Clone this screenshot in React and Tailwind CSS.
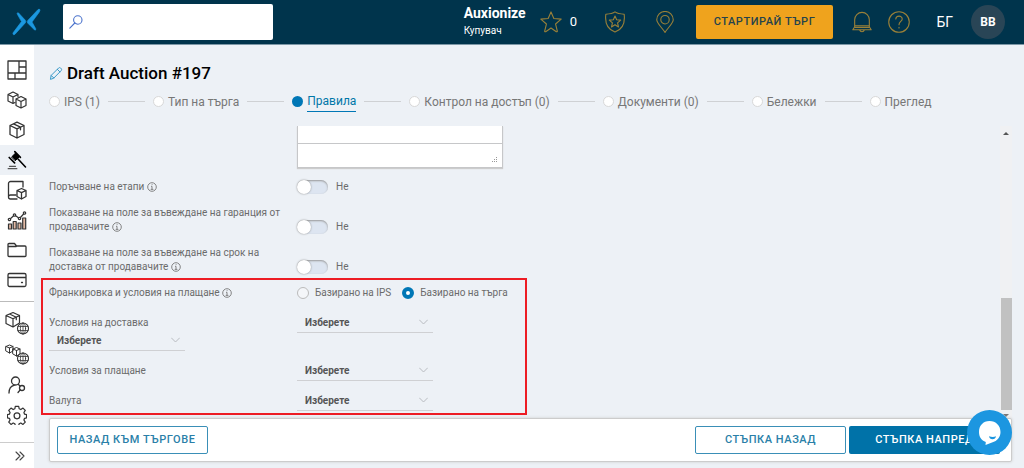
import React from "react";

function Icon({ size = 22, box = 24, sw = 1.3, children, className = "" }) {
  return (
    <svg
      width={size}
      height={size}
      viewBox={`0 0 ${box} ${box}`}
      fill="none"
      stroke="currentColor"
      strokeWidth={sw}
      strokeLinecap="round"
      strokeLinejoin="round"
      className={`shrink-0 ${className}`}
      aria-hidden="true"
    >
      {children}
    </svg>
  );
}

const GLOBE = (
  <>
    <circle cx="18" cy="17.500" r="5.500" fill="#fff" strokeWidth="1.100" />
    <g strokeWidth="0.800">
      <ellipse cx="18" cy="17.500" rx="2.600" ry="5.500" />
      <path d="M13 15.500h10M13 19.500h10M18 12v11" />
    </g>
  </>
);

const MAIN_NAV = [
  {
    name: "Табло",
    icon: (
      <Icon size={20} box={20} sw={1.3}>
        <path d="M1 1h18v18H1zM12 1v12M1 13h18M12 7h7M8 13v6" />
      </Icon>
    ),
  },
  {
    name: "Групи продукти",
    icon: (
      <Icon size={20} box={20} sw={1.2}>
        <path d="M8 12.500L6 13.500 1 11V4.500L6 2l5 2.500v2M1 4.500L6 7l5-2.500M6 7v6.500" />
        <path d="M9 9l5-2.500L19 9v6.500L14 18l-5-2.500zM9 9l5 2.500L19 9M14 11.500V18" />
      </Icon>
    ),
  },
  {
    name: "Продукти",
    icon: (
      <Icon size={18} box={18} sw={1.3}>
        <path d="M9 1.200l7 3.300v9L9 17l-7-3.500v-9zM2 4.500l7 3.300 7-3.300M9 7.800V17M5.500 2.900l7 3.300v2.600" />
      </Icon>
    ),
  },
  {
    name: "Търгове",
    active: true,
    icon: (
      <Icon size={20} box={20} sw={1}>
        <path d="M4.800 6.800l4-4 3.700 3.700-4 4z" fill="currentColor" />
        <path d="M2.200 7.500l5.400 5.400M7.800 1.700l5.600 5.600" strokeWidth="1.700" />
        <path d="M10.800 8.800L18.500 17" strokeWidth="1.600" />
        <path d="M2.500 16.300h6M1.200 18.700h8.600" strokeWidth="1.300" stroke="#555" />
      </Icon>
    ),
  },
  {
    name: "Каталог",
    icon: (
      <Icon size={20} box={20} sw={1.3}>
        <path d="M16 7V1.500H3.500A2 2 0 0 0 1.500 3.500V17a2 2 0 0 0 2 2H10M1.500 17a2 2 0 0 1 2-2H9" />
        <path d="M10 10.500L14.500 8.500 19 10.500v6L14.500 19 10 16.500zM10 10.500l4.500 2.200 4.500-2.200M14.500 12.700V19" />
      </Icon>
    ),
  },
  {
    name: "Отчети",
    icon: (
      <Icon size={20} box={20} sw={1.2}>
        <path d="M1.500 14h3v5h-3zM6.200 11.500h3v7.500h-3zM11 13h3v6h-3zM15.700 8h3v11h-3z" fill="#e2b9a4" />
        <path d="M2.500 9.500L7.500 5l5 3.500L17.500 3" />
        <circle cx="2.500" cy="9.500" r="1.200" fill="#fff" />
        <circle cx="7.500" cy="5" r="1.200" fill="#fff" />
        <circle cx="12.500" cy="8.500" r="1.200" fill="#fff" />
        <circle cx="17.500" cy="3" r="1.200" fill="#fff" />
      </Icon>
    ),
  },
  {
    name: "Папки",
    icon: (
      <Icon size={20} box={20} sw={1.3}>
        <path d="M1 15.500V4.500a1 1 0 0 1 1-1h5.500l2 2.500H18a1 1 0 0 1 1 1v8.500a1 1 0 0 1-1 1H2a1 1 0 0 1-1-1zM1.200 6.500h8" />
      </Icon>
    ),
  },
  {
    name: "Плащания",
    icon: (
      <Icon size={20} box={20} sw={1.3}>
        <path d="M2.500 3.500h15a1.500 1.500 0 0 1 1.500 1.500v10a1.500 1.500 0 0 1-1.500 1.500h-15A1.500 1.500 0 0 1 1 15V5a1.500 1.500 0 0 1 1.500-1.500zM1 7.500h18M14.500 12.500h1" />
      </Icon>
    ),
  },
];

const WORLD_NAV = [
  {
    name: "Глобални продукти",
    icon: (
      <Icon size={24} sw={1.2}>
        <path d="M1 4.500L8 1.500l6.500 3V12L8 16l-7-3.500zM1 4.500l7 3.300 6.500-3.300M8 7.800V16M4.500 3l6.800 3.200v2.500" />
        {GLOBE}
      </Icon>
    ),
  },
  {
    name: "Глобални групи",
    icon: (
      <Icon size={24} sw={1}>
        <path d="M1 5.500L4.500 4 8 5.500V10l-3.500 2L1 10zM1 5.500L4.500 7 8 5.500M4.500 7v5" />
        <path d="M8 8l3.500-1.500L15 8v5l-3.500 2L8 13zM8 8l3.500 1.500L15 8M11.500 9.500V15" />
        {GLOBE}
      </Icon>
    ),
  },
];

const USER_NAV = [
  {
    name: "Потребители",
    icon: (
      <Icon size={18} box={18} sw={1.300}>
        <circle cx="7.500" cy="5" r="4" />
        <path d="M1 17c0-4.500 2-7 5.500-7.800M10.500 8.500l1 1" />
        <circle cx="14" cy="12" r="2.500" />
        <path d="M12.200 13.800L10 16.500" />
      </Icon>
    ),
  },
  {
    name: "Настройки",
    icon: (
      <Icon size={20} box={24} sw={1.500}>
        <path d="M10 1.500h4l.6 3 2 .9 2.600-1.700 2.700 2.800-1.600 2.500.8 2 2.400.6v3.800l-2.400.6-.8 2 1.600 2.500-2.700 2.800-2.600-1.700-2 .9-.6 2.500h-4l-.6-2.500-2-.9-2.600 1.700-2.700-2.800 1.600-2.500-.8-2-2.400-.6v-3.800l2.400-.6.8-2-1.600-2.500 2.700-2.800 2.600 1.700 2-.9z" />
        <circle cx="12" cy="13" r="3.500" />
      </Icon>
    ),
  },
];

function NavGroup({ items }) {
  return (
    <ul>
      {items.map((it) => (
        <li key={it.name}>
          <a
            href="#"
            aria-label={it.name}
            aria-current={it.active ? "page" : undefined}
            className={
              it.active
                ? "flex h-[30px] items-center justify-center bg-[#edf1f6] text-black"
                : "flex h-[30px] items-center justify-center text-[#333]"
            }
          >
            {it.icon}
          </a>
        </li>
      ))}
    </ul>
  );
}

function Sidebar() {
  return (
    <nav className="flex w-[34px] shrink-0 flex-col bg-white pt-2.5">
      <NavGroup items={MAIN_NAV} />
      <hr className="mt-1.5 mb-1.5 border-[#bbb]" />
      <NavGroup items={WORLD_NAV} />
      <div className="h-0.5" />
      <NavGroup items={USER_NAV} />
      <button
        type="button"
        aria-label="Разгъване"
        className="mt-auto flex h-[26px] items-center justify-center border-t border-[#ccc] pl-1.5 text-[#444]"
      >
        <Icon size={10} box={10} sw={1.1}>
          <path d="M1 1l4 4-4 4M5 1l4 4-4 4" />
        </Icon>
      </button>
    </nav>
  );
}

function Header() {
  return (
    <header className="flex h-[45px] shrink-0 items-center border-b border-[#7d98a7] bg-[#00344c] pr-[19px] pl-3 text-white">
      <a href="#" aria-label="Auxionize">
        <svg
          width="29"
          height="28"
          viewBox="0 0 29 28"
          fill="#1b98e0"
          stroke="#1b98e0"
          strokeWidth="0.600"
          aria-hidden="true"
        >
          <path d="M5.200 5.200Q5.500 4.200 6.600 5L13.300 12.200Q14.500 13.600 13.200 15L3 26.200Q1 27.500 .9 25.600 1 24.700 2 23.500L9.500 13.600 5.500 6.600Q5 5.800 5.200 5.200z" />
          <path d="M27.800 1.500Q28.400 2.500 27 4.500L20 14 23.700 20.600Q24.200 22.600 22.600 22L15.800 15.200Q14.600 13.800 15.800 12.400L25.800 1.800Q27.200 .6 27.800 1.500z" />
        </svg>
      </a>
      <label className="ml-[22px] flex h-9 w-[210px] items-center rounded-xs bg-white pl-1.5">
        <Icon size={14} box={14} sw={1.1} className="text-[#4a72cc]">
          <circle cx="8.800" cy="5" r="4.200" />
          <path d="M5.800 8L.8 13.200" />
        </Icon>
        <input
          type="search"
          aria-label="Търсене"
          className="h-full w-full bg-transparent px-2 text-[13px] text-[#333] outline-none"
        />
      </label>
      <div className="ml-auto flex items-center">
        <div className="w-[76px]">
          <div className="text-[14px] leading-[17px] font-bold">Auxionize</div>
          <div className="text-[10px] leading-[17px]">Купувач</div>
        </div>
        <a href="#" className="flex w-[64px] items-center gap-2 text-[13px]" aria-label="Любими 0">
          <Icon size={22} sw={1.2} className="text-[#998039]">
            <path d="M12 1l3.100 7.200 8 .7-6.100 5.300 1.900 7.800q-.1 1-1.100.6L12 18.500l-5.800 4.100q-1 .4-1.100-.6L7 14.200.9 8.900l8-.7z" />
          </Icon>
          <span>0</span>
        </a>
        <a href="#" className="w-[50px]" aria-label="Сигурност">
          <Icon size={22} sw={1.200} className="text-[#998039]">
            <path d="M12 1c2.500 1.800 6 2.300 10 2.500 1 8-.3 16-10 19.500C2.300 19.500 1 11.500 2 3.500 6 3.300 9.500 2.800 12 1z" />
            <path d="M12 5.500l1.800 4.100 4.400.4-3.400 3 1 4.400L12 15l-3.800 2.400 1-4.400-3.400-3 4.400-.4z" />
          </Icon>
        </a>
        <a href="#" className="w-[42px]" aria-label="Локация">
          <Icon size={22} sw={1.200} className="text-[#998039]">
            <path d="M12 23.300C9.500 19 3 13.500 3 9.500a9 9 0 0 1 18 0c0 4-6.500 9.500-9 13.800z" />
            <circle cx="12" cy="9.500" r="4.600" />
          </Icon>
        </a>
        <button
          type="button"
          className="h-[34px] rounded-xs bg-[#efa31d] px-[18px] text-[11px] font-medium tracking-wider whitespace-nowrap text-[#26434c]"
        >
          СТАРТИРАЙ ТЪРГ
        </button>
        <button type="button" aria-label="Известия" className="ml-[18px]">
          <Icon size={22} sw={1.200} className="text-[#998039]">
            <path d="M4 18V9.500a8 8 0 0 1 16 0V18M3.500 18h17l1.500 2.500H2zM9.500 20.700a2.600 2.600 0 0 0 5 0M4 16.200h16" />
          </Icon>
        </button>
        <button type="button" aria-label="Помощ" className="ml-[15px]">
          <Icon size={22} sw={1.200} className="text-[#998039]">
            <circle cx="12" cy="12" r="11.200" />
            <path d="M8.500 8.800c.2-4.300 7-4.200 7-.2 0 2.800-3.500 2.900-3.500 6.400M12 17.800v.8" />
          </Icon>
        </button>
        <button type="button" className="ml-[26px] text-[14px]">
          БГ
        </button>
        <button
          type="button"
          className="ml-[18px] size-[34px] rounded-full bg-[#294556] text-[12px] font-bold"
        >
          BB
        </button>
      </div>
    </header>
  );
}

const STEPS = [
  "IPS (1)",
  "Тип на търга",
  "Правила",
  "Контрол на достъп (0)",
  "Документи (0)",
  "Бележки",
  "Преглед",
];

function Steps() {
  return (
    <ol className="mt-1.5 flex items-center text-[12px] leading-[20px] whitespace-nowrap text-[#777]">
      {STEPS.map((s, i) => (
        <li key={s} className="flex items-center">
          {i > 0 && <span className="mx-2 h-px w-[37px] bg-[#cfd1d4]" />}
          <a href="#" className="flex items-center gap-1">
            <span
              className={
                i === 2
                  ? "size-[11px] rounded-full bg-[#0077b6]"
                  : "size-[11px] rounded-full border border-[#d8d8d8] bg-white"
              }
            />
            <span className={i === 2 ? "border-b border-[#0077b6] text-[#0077a8]" : ""}>{s}</span>
          </a>
        </li>
      ))}
    </ol>
  );
}

function Info() {
  return (
    <svg
      width="10"
      height="10"
      viewBox="0 0 10 10"
      fill="none"
      stroke="#777"
      className="inline-block align-[-2px]"
      aria-hidden="true"
    >
      <circle cx="5" cy="5" r="4.300" strokeWidth="0.900" />
      <path d="M4 4.300h1v3M3.700 7.400h2.700M4.700 2.600h.8" strokeWidth="0.900" />
    </svg>
  );
}

function ToggleRow({ id, label }) {
  return (
    <div className="grid grid-cols-[248px_1fr] items-end">
      <label htmlFor={id} className="pr-4">
        {label} <Info />
      </label>
      <div className="flex h-3.5 items-center gap-2">
        <input
          id={id}
          type="checkbox"
          role="switch"
          className="h-3.5 w-[31px] appearance-none rounded-full bg-[#dde5f1] shadow-[inset_0_1px_2px_#999] before:block before:size-3.5 before:rounded-full before:bg-white before:shadow-[0_0_2px_#888] checked:before:ml-auto"
        />
        <span>Не</span>
      </div>
    </div>
  );
}

function Select({ id, label }) {
  return (
    <div className="grid w-[136px] items-center">
      <select
        id={id}
        aria-label={label}
        className="col-start-1 row-start-1 h-5 appearance-none border-b border-[#cfd0d3] bg-transparent pl-2 text-[10px] font-bold text-[#555] outline-none"
      >
        <option>Изберете</option>
      </select>
      <Icon
        size={9}
        box={9}
        sw={1}
        className="pointer-events-none col-start-1 row-start-1 mr-[5px] justify-self-end text-[#b8bbc0]"
      >
        <path d="M.5 1l4 4 4-4" />
      </Icon>
    </div>
  );
}

function Radio({ label, checked }) {
  return (
    <label className="flex items-center gap-1.5">
      <input
        type="radio"
        name="terms"
        defaultChecked={checked}
        className="size-3 appearance-none rounded-full border border-[#bbb] bg-[#f4f6f9] checked:border-4 checked:border-[#0077b6] checked:bg-white"
      />
      {label}
    </label>
  );
}

function Scrollbar() {
  return (
    <div className="flex w-3 shrink-0 flex-col items-center bg-[#f0f1f3] pt-1.5 pb-px" aria-hidden="true">
      <svg width="6" height="3" viewBox="0 0 6 3" fill="#555">
        <path d="M3 0l3 3H0z" />
      </svg>
      <div className="flex-[164]" />
      <div className="w-[11px] flex-[112] bg-[#c1c1c1]" />
      <svg width="6" height="3" viewBox="0 0 6 3" fill="#777" className="mt-1">
        <path d="M3 3l3-3H0z" />
      </svg>
    </div>
  );
}

export default function App() {
  return (
    <div className="flex min-h-screen flex-col bg-[#edf1f6] font-[Roboto,sans-serif]">
      <Header />
      <div className="flex flex-1">
        <Sidebar />
        <main className="flex min-w-0 flex-1 flex-col pr-3 pb-1.5 pl-[15px]">
          <div className="mt-4 flex items-center gap-1">
            <Icon size={14} box={14} sw={1} className="text-[#3a9ac9]">
              <path d="M1.500 13l.6-3.500L9.600 2q1-.9 2 0l.6.600q.9 1 0 2L4.900 12zM8.300 3.300l2.600 2.600M2.100 9.500l2.800 2.500" />
            </Icon>
            <h1 className="text-[17px] leading-[24px] font-medium text-black">Draft Auction #197</h1>
          </div>
          <Steps />
          <div className="mt-3.5 flex flex-1">
            <form className="flex-1 text-[10px] leading-[14px] text-[#6b6b6b]">
              <div className="ml-[248px] w-[206px] border-x border-b border-[#c6c7c9] bg-white shadow-[0_1px_1px_#ccc]">
                <input
                  type="text"
                  aria-label="Заглавие"
                  className="block h-[18px] w-full border-b border-[#c6c7c9] px-2 outline-none"
                />
                <div className="grid">
                  <textarea
                    aria-label="Описание"
                    className="col-start-1 row-start-1 h-[23px] resize-none px-2 outline-none"
                  />
                  <svg
                    width="6"
                    height="6"
                    viewBox="0 0 6 6"
                    fill="#999"
                    className="pointer-events-none col-start-1 row-start-1 mr-1 mb-1 self-end justify-self-end"
                    aria-hidden="true"
                  >
                    <path d="M4 0h1v1h-1zM2 2h1v1h-1zM4 2h1v1h-1zM0 4h1v1h-1zM2 4h1v1h-1zM4 4h1v1h-1z" />
                  </svg>
                </div>
              </div>
              <div className="mt-3 flex flex-col gap-3">
                <ToggleRow id="stages" label="Поръчване на етапи" />
                <ToggleRow id="warranty" label="Показване на поле за въвеждане на гаранция от продавачите" />
                <ToggleRow id="delivery" label="Показване на поле за въвеждане на срок на доставка от продавачите" />
              </div>
              <div className="mt-1 -ml-2 flex w-[486px] flex-col gap-2.5 border-2 border-[#ed1c24] px-1.5 pt-1.5 pb-0.5">
                <fieldset className="grid grid-cols-[248px_1fr] items-center pb-[3px]">
                  <legend className="float-left w-[248px]">
                    Франкировка и условия на плащане <Info />
                  </legend>
                  <div className="flex gap-[11px] whitespace-nowrap">
                    <Radio label="Базирано на IPS" />
                    <Radio label="Базирано на търга" checked />
                  </div>
                </fieldset>
                <div className="grid grid-cols-[248px_1fr] items-start">
                  <div>
                    <label htmlFor="ship" className="block pt-[3px] pb-px">
                      Условия на доставка
                    </label>
                    <Select id="ship" />
                  </div>
                  <Select id="ship-place" label="Място на доставка" />
                </div>
                <div className="grid grid-cols-[248px_1fr] items-center">
                  <label htmlFor="pay">Условия за плащане</label>
                  <Select id="pay" />
                </div>
                <div className="grid grid-cols-[248px_1fr] items-center">
                  <label htmlFor="currency">Валута</label>
                  <Select id="currency" />
                </div>
              </div>
            </form>
            <Scrollbar />
          </div>
          <div className="flex h-11 items-center gap-[3px] rounded-xs border border-[#ccc] bg-white pr-[11px] pl-[7px] text-[11px] font-medium tracking-wider whitespace-nowrap shadow-[0_0_3px_#ccc]">
            <button type="button" className="mr-auto h-7 w-[151px] rounded-xs border border-[#3a8fb7] text-[#2a7fa8]">
              НАЗАД КЪМ ТЪРГОВЕ
            </button>
            <button type="button" className="h-7 w-[151px] rounded-xs border border-[#3a8fb7] text-[#2a7fa8]">
              СТЪПКА НАЗАД
            </button>
            <button type="button" className="h-7 w-[151px] rounded-xs bg-[#0072a8] text-white">
              СТЪПКА НАПРЕД
            </button>
          </div>
        </main>
      </div>
      <button
        type="button"
        aria-label="Чат"
        className="fixed right-3 bottom-[13px] flex size-[45px] items-center justify-center rounded-full bg-[#1c96e0]"
      >
        <svg width="23" height="24" viewBox="0 0 23 24" aria-hidden="true">
          <path
            d="M11.500 0C18 0 22.500 4.700 22.500 11c0 5-3 9-8.500 10.500L7.500 24l.3-3C3.500 19.500 1 16 1 11 1 4.700 5 0 11.500 0z"
            fill="#fff"
          />
          <path d="M11 15.200q4 1.600 7 0-.5 3-3.500 3T11 15.200z" fill="#1c96e0" />
        </svg>
      </button>
    </div>
  );
}
